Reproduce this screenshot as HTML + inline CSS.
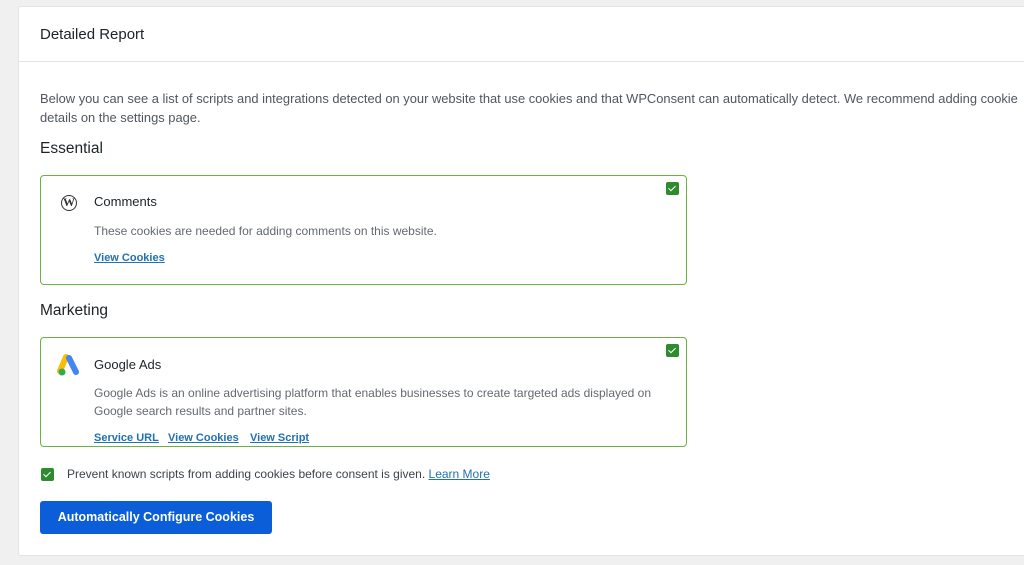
<!DOCTYPE html>
<html><head><meta charset="utf-8"><style>
*{box-sizing:border-box;margin:0;padding:0}
body{width:1024px;height:565px;background:#f0f0f1;font-family:"Liberation Sans",sans-serif;color:#1d2327;overflow:hidden;position:relative}
.panel{position:absolute;left:18px;top:6px;width:1020px;height:550px;background:#fff;border:1px solid #e2e4e7;border-radius:3px}
.hdr{height:55px;border-bottom:1px solid #e2e4e7;padding:19px 0 0 21px;font-size:15px;color:#1d2327}
.intro{position:absolute;left:21px;top:82px;font-size:12.9px;line-height:19px;color:#50575e;width:1000px;white-space:nowrap}
h3{position:absolute;left:21px;font-size:15.5px;font-weight:normal;color:#1d2327}
.card{position:absolute;left:21px;width:647px;border:1.5px solid #69b244;border-radius:4px;background:#fff}
.cb{position:absolute;width:13px;height:13px;background:#2e8b2e;border-radius:2px}
.cb:after{content:"";position:absolute;left:4px;top:2px;width:3px;height:6px;border:solid #fff;border-width:0 1.5px 1.5px 0;transform:rotate(45deg)}
.t{position:absolute;left:53px;font-size:13px;color:#1d2327}
.d{position:absolute;left:53px;font-size:12px;line-height:18px;color:#646970}
.l{position:absolute;font-size:11px;font-weight:bold;color:#2271b1;text-decoration:underline}
.btn{position:absolute;left:21px;top:494px;width:232px;height:33px;background:#0b5ed7;border-radius:3px;color:#fff;font-weight:bold;font-size:12.5px;text-align:center;line-height:33px}
</style></head><body>
<div class="panel">
<div class="hdr">Detailed Report</div>
<div class="intro">Below you can see a list of scripts and integrations detected on your website that use cookies and that WPConsent can automatically detect. We recommend adding cookie<br>details on the settings page.</div>
<h3 style="top:133px">Essential</h3>
<div class="card" style="top:168px;height:110px">
<div style="position:absolute;left:20px;top:19px;width:16px;height:16px;border:1.5px solid #333;border-radius:50%;font-family:'Liberation Serif',serif;font-size:12px;font-weight:bold;text-align:center;line-height:13px;color:#333">W</div>
<div class="t" style="top:18px">Comments</div>
<div class="d" style="top:46px">These cookies are needed for adding comments on this website.</div>
<div class="l" style="left:53px;top:76px">View Cookies</div>
<div class="cb" style="left:625px;top:6px"></div>
</div>
<h3 style="top:295px">Marketing</h3>
<div class="card" style="top:330px;height:110px">
<svg style="position:absolute;left:16px;top:16px" width="24" height="24" viewBox="0 0 24 24"><path d="M9 3 L3 17" stroke="#fbbc04" stroke-width="6" stroke-linecap="round"/><path d="M12 4 L19 18" stroke="#4285f4" stroke-width="6" stroke-linecap="round"/><circle cx="5" cy="18" r="3.5" fill="#34a853"/></svg>
<div class="t" style="top:19px">Google Ads</div>
<div class="d" style="top:46px">Google Ads is an online advertising platform that enables businesses to create targeted ads displayed on<br>Google search results and partner sites.</div>
<div class="l" style="left:53px;top:94px">Service URL</div>
<div class="l" style="left:127px;top:94px">View Cookies</div>
<div class="l" style="left:209px;top:94px">View Script</div>
<div class="cb" style="left:625px;top:6px"></div>
</div>
<div class="cb" style="left:22px;top:461px"></div>
<div style="position:absolute;left:48px;top:460px;font-size:12px;color:#3c434a">Prevent known scripts from adding cookies before consent is given. <span style="color:#2271b1;text-decoration:underline">Learn More</span></div>
<div class="btn">Automatically Configure Cookies</div>
</div>
</body></html>
